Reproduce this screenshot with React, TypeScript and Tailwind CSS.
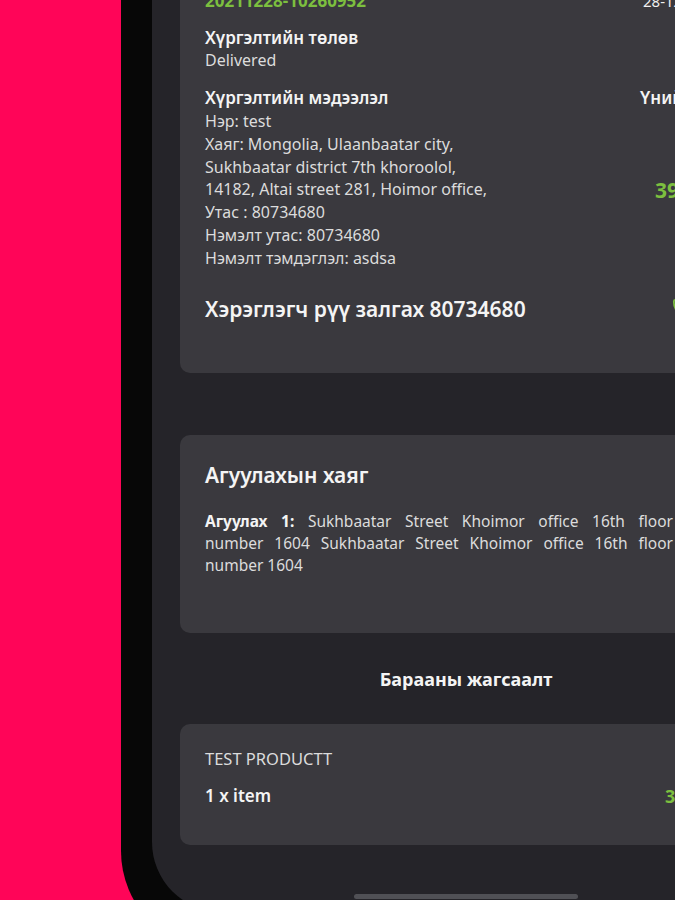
import React from "react";
import { Phone } from "lucide-react";

export default function App() {
  const font = { fontFamily: '"Noto Sans", "Open Sans", sans-serif' };
  return (
    <div
      className="w-[675px] h-[900px] overflow-hidden bg-[#ff0558]"
      style={font}
    >
      <div className="ml-[121px] mt-[-100px] w-[690px] bg-[#070707] rounded-bl-[100px] rounded-br-[100px] px-[31px] pt-[31px] pb-[39px]">
        <div className="bg-[#252429] rounded-bl-[70px] rounded-br-[70px] px-[28px] pt-[39px] pb-[13px] flex flex-col">
          {/* Card 1 */}
          <div className="bg-[#3a393e] rounded-[10px] px-[25px] pt-[20px] pb-[50px]">
            <div className="flex items-baseline">
              <div className="flex-1 text-[17px] leading-[22px] font-bold text-[#7cbf3f]">
                20211228-10260952
              </div>
              <div className="w-[84px] whitespace-nowrap text-[15px] leading-[22px] text-[#f0f0f0]">
                28-12-2021
              </div>
            </div>
            <div className="mt-[15px] text-[17px] leading-[22px] font-semibold text-[#f4f4f4]">
              Хүргэлтийн төлөв
            </div>
            <div className="text-[16px] leading-[22px] text-[#dcdcdc]">
              Delivered
            </div>
            <div className="mt-[16px] flex">
              <div className="flex-1 flex flex-col">
                <div className="text-[17px] leading-[22px] font-semibold text-[#f4f4f4]">
                  Хүргэлтийн мэдээлэл
                </div>
                <div className="mt-[1px] text-[16px] leading-[22.8px] text-[#dcdcdc]">
                  <div>Нэр: test</div>
                  <div>Хаяг: Mongolia, Ulaanbaatar city,</div>
                  <div>Sukhbaatar district 7th khoroolol,</div>
                  <div>14182, Altai street 281, Hoimor office,</div>
                  <div>Утас : 80734680</div>
                  <div>Нэмэлт утас: 80734680</div>
                  <div>Нэмэлт тэмдэглэл: asdsa</div>
                </div>
              </div>
              <div className="w-[87px] flex flex-col whitespace-nowrap">
                <div className="text-[17px] leading-[22px] font-semibold text-[#f4f4f4]">
                  Үнийн дүн
                </div>
                <div className="mt-[67px] ml-[15px] text-[21px] leading-[28px] font-bold text-[#7cbf3f]">
                  39,000₮
                </div>
              </div>
            </div>
            <div className="mt-[25px] flex items-center">
              <div className="flex-1 text-[21px] leading-[28px] font-semibold text-[#f4f4f4]">
                Хэрэглэгч рүү залгах 80734680
              </div>
              <div className="w-[55px]">
                <Phone className="w-[22px] h-[22px] text-[#7cbf3f]" />
              </div>
            </div>
          </div>

          {/* Card 2 */}
          <div className="mt-[62px] bg-[#3a393e] rounded-[10px] px-[25px] pt-[26px] pb-[57px]">
            <div className="text-[21px] leading-[28px] font-semibold text-[#f4f4f4]">
              Агуулахын хаяг
            </div>
            <div className="mt-[21px] w-[468px] text-[15.5px] leading-[22px] text-[#dcdcdc]">
              <div className="text-justify [text-align-last:justify]">
                <span className="font-bold text-[#f4f4f4]">Агуулах 1:</span>{" "}
                Sukhbaatar Street Khoimor office 16th floor
              </div>
              <div className="text-justify [text-align-last:justify]">
                number 1604 Sukhbaatar Street Khoimor office 16th floor
              </div>
              <div>number 1604</div>
            </div>
          </div>

          {/* Title */}
          <div className="mt-[34px] text-center text-[18px] leading-[24px] font-bold text-[#f4f4f4]">
            Барааны жагсаалт
          </div>

          {/* Card 3 */}
          <div className="mt-[33px] bg-[#3a393e] rounded-[10px] px-[25px] pt-[24px] pb-[37px]">
            <div className="text-[16.5px] leading-[22px] text-[#dcdcdc]">
              TEST PRODUCTT
            </div>
            <div className="mt-[14px] flex">
              <div className="flex-1 text-[17px] leading-[24px] font-semibold text-[#f4f4f4]">
                1 x item
              </div>
              <div className="w-[62px] whitespace-nowrap text-[18px] leading-[24px] font-bold text-[#7cbf3f]">
                39,000₮
              </div>
            </div>
          </div>

          {/* Home indicator */}
          <div className="mt-[49px] self-center w-[224px] h-[5px] rounded-full bg-[#505055]" />
        </div>
      </div>
    </div>
  );
}
